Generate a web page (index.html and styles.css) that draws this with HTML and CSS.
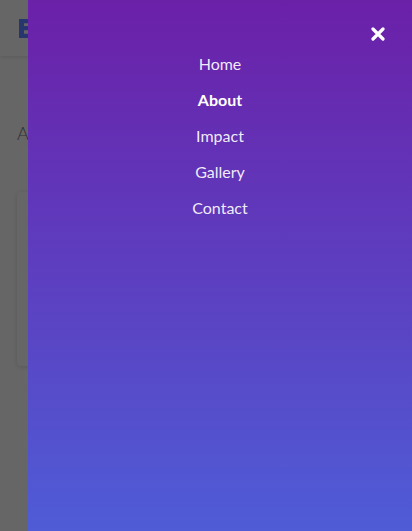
FILE: index.html
```html
<!DOCTYPE html>
<html lang="en">
<head>
<meta charset="utf-8">
<title>About</title>
<link rel="stylesheet" href="styles.css">
</head>
<body>
  <header class="site-header">
    <span class="logo">E</span>
  </header>
  <main class="page">
    <h1 class="page-title">About</h1>
    <section class="card"></section>
  </main>

  <div class="overlay"></div>
  <nav class="drawer">
    <button class="close" aria-label="Close menu">
      <svg viewBox="0 0 14 14" width="14" height="14"><path d="M2 2 L12 12 M12 2 L2 12" stroke="#fff" stroke-width="3.2" stroke-linecap="round"/></svg>
    </button>
    <ul class="menu">
      <li><a href="#">Home</a></li>
      <li><a href="#" class="active">About</a></li>
      <li><a href="#">Impact</a></li>
      <li><a href="#">Gallery</a></li>
      <li><a href="#">Contact</a></li>
    </ul>
  </nav>
</body>
</html>
```

FILE: styles.css
```css
* { box-sizing: border-box; }
html, body { margin: 0; padding: 0; }
body {
  font-family: Lato, "Open Sans", sans-serif;
  background: #fff;
  width: 412px;
  height: 531px;
  overflow: hidden;
}
.site-header {
  height: 56px;
  background: #fff;
  box-shadow: 0 1px 4px rgba(0,0,0,0.12);
  display: flex;
  align-items: center;
  padding-left: 17px;
}
.logo {
  position: relative;
  z-index: 60;
  font-family: "Open Sans", sans-serif;
  font-weight: 800;
  font-size: 26px;
  color: #27366f;
  line-height: 1;
}
.page { padding: 0 17px; }
.page-title {
  margin: 0;
  padding-top: 66px;
  font-weight: 300;
  font-size: 18px;
  color: #777;
  line-height: 22px;
}
.card {
  margin-top: 48px;
  height: 174px;
  border-radius: 4px;
  background: #fff;
  box-shadow: 0 1px 5px rgba(0,0,0,0.14);
}
.overlay {
  position: fixed;
  inset: 0;
  background: rgba(0,0,0,0.6);
  z-index: 50;
}
.drawer {
  position: fixed;
  top: 0;
  right: 0;
  bottom: 0;
  width: 384px;
  z-index: 70;
  background: linear-gradient(to bottom, #6b20a8 0%, #4f5cd6 100%);
  padding-top: 46px;
}
.close {
  position: absolute;
  top: 27px;
  right: 27px;
  width: 14px;
  height: 14px;
  padding: 0;
  border: 0;
  background: none;
  display: flex;
}
.menu {
  list-style: none;
  margin: 0;
  padding: 0;
  text-align: center;
}
.menu a {
  display: block;
  line-height: 36px;
  font-size: 16px;
  color: rgba(255,255,255,0.92);
  text-decoration: none;
  font-weight: 400;
}
.menu a.active {
  color: #fff;
  font-weight: 700;
}
```
